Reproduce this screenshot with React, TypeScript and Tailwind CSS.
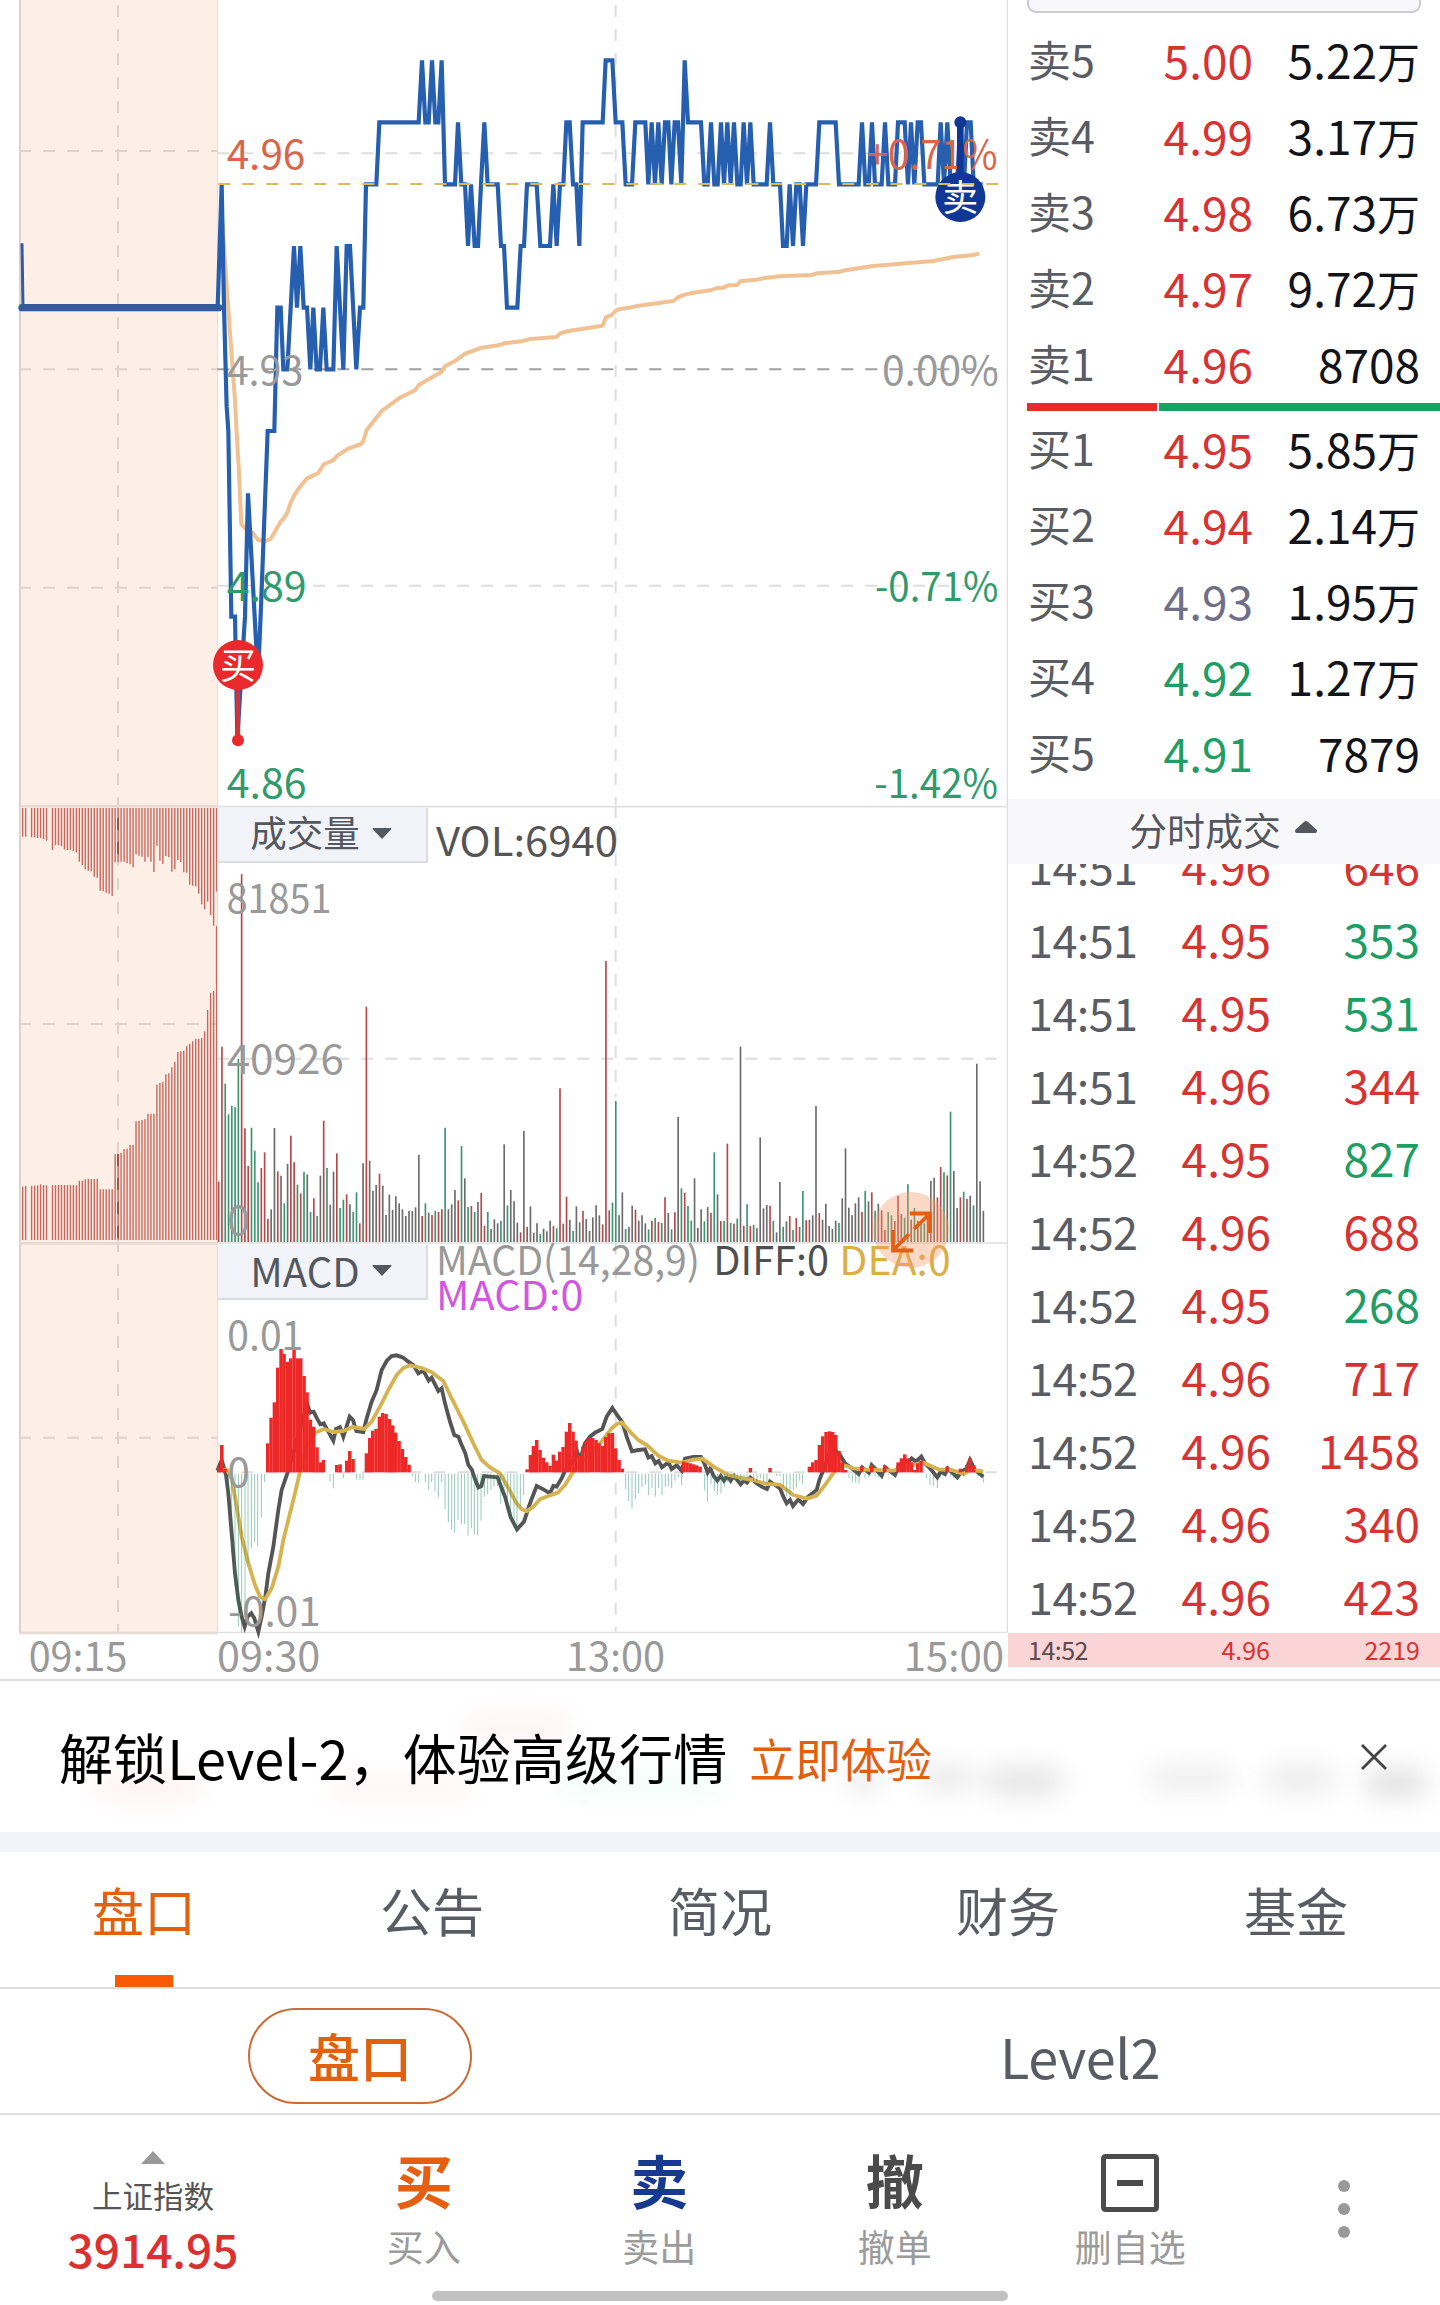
import { FaCaretDown } from "react-icons/fa6"
import clsx from "clsx"

type Level = { name: string; price: string; volume: string; unit?: string; tone: string }
type Trade = { time: string; price: string; volume: string; up: boolean }

const BAR_COLORS: Record<string, string> = { r: "#b8474a", g: "#3a9570", k: "#6c6c6c" }

// charts are drawn at 3 units per css pixel
const PRICE_LINE =
  "653,923 665,553 672,923 680,1220 685,1293 694,1850 705,1850 712,2215 735,1850 744,1480 774,2035 783,1820 803,1293 823,1293 " +
  "832,923 842,923 850,1108 862,1108 882,738 891,923 901,738 911,923 921,923 931,1108 940,923 950,1108 960,1108 970,923 980,1108 " +
  "1000,1108 1010,738 1030,1108 1040,738 1050,738 1069,1108 1080,923 1090,923 1098,553 1129,553 1138,367 1256,367 1266,181 1276,367 " +
  "1286,367 1296,181 1306,367 1315,367 1325,181 1335,553 1365,553 1374,367 1384,553 1395,553 1404,738 1413,553 1424,738 1434,738 " +
  "1443,553 1453,367 1463,553 1493,553 1503,738 1512,738 1521,923 1552,923 1562,738 1572,738 1581,553 1610,553 1621,738 1650,738 " +
  "1660,553 1670,738 1680,553 1690,553 1699,367 1709,367 1719,553 1729,553 1738,738 1748,367 1808,367 1817,181 1837,181 1847,367 " +
  "1867,367 1877,553 1896,553 1906,367 1936,367 1945,553 1955,367 1965,553 1975,367 1985,553 1995,367 2005,367 2014,553 2024,367 " +
  "2034,367 2044,553 2054,181 2064,367 2103,367 2113,553 2123,553 2133,367 2143,553 2153,553 2163,367 2172,553 2182,367 2192,553 " +
  "2202,367 2212,553 2222,553 2231,367 2241,553 2251,367 2261,553 2300,553 2310,367 2320,553 2340,553 2349,738 2360,738 2369,553 " +
  "2379,738 2389,553 2399,553 2409,738 2419,553 2448,553 2458,367 2507,367 2517,553 2576,553 2586,367 2596,553 2606,553 2616,367 " +
  "2625,553 2645,553 2655,367 2665,553 2685,553 2694,367 2714,367 2724,553 2733,367 2743,553 2753,367 2763,367 2773,553 2813,553 " +
  "2822,367 2832,553 2842,367 2852,553 2871,553 2881,367 2892,553 2901,367 2912,367 2921,553 2948,553"

const AVG_LINE =
  "665,640 678,830 690,1000 705,1200 710,1300 716,1400 724,1572 735,1585 755,1595 775,1620 795,1624 812,1617 842,1565 850,1557 " +
  "862,1538 872,1508 882,1487 900,1460 920,1436 955,1419 972,1392 998,1382 1012,1367 1045,1346 1083,1332 1090,1323 1100,1290 " +
  "1145,1233 1160,1222 1200,1193 1246,1170 1256,1155 1325,1115 1335,1099 1370,1080 1393,1062 1445,1043 1500,1035 1512,1030 " +
  "1565,1024 1590,1017 1670,1011 1680,1000 1705,993 1808,977 1818,952 1835,945 1848,931 1865,926 1890,923 1910,918 2020,903 " +
  "2035,891 2055,884 2080,878 2135,870 2150,864 2170,863 2185,856 2212,855 2222,843 2270,839 2300,833 2340,829 2435,825 " +
  "2450,820 2520,815 2535,811 2620,798 2700,791 2800,783 2860,771 2920,765 2938,760"

// call auction: matched volume grows from the bottom, unmatched hangs from the top (0 = no bar)
const AUCTION_TOP = [
  110, 110, 0, 112, 112, 114, 114, 117, 122, 0, 150, 135, 135, 138, 148, 150, 150, 153, 157, 185, 195, 208, 212, 214, 230, 233,
  272, 274, 278, 281, 288, 187, 187, 185, 185, 190, 193, 202, 163, 167, 170, 185, 172, 185, 216, 137, 182, 192, 168, 172, 215,
  208, 180, 186, 217, 218, 254, 257, 259, 281, 313, 328, 305, 345, 377, 275,
]
const AUCTION_BOTTOM = [
  1160, 1158, 0, 1158, 1157, 1156, 1153, 1155, 1156, 0, 1155, 1155, 1155, 1155, 1155, 1155, 1155, 1155, 1156, 1142, 1142, 1138,
  1137, 1137, 1137, 1137, 1168, 1168, 1168, 1168, 1168, 1063, 1062, 1058, 1047, 1046, 1035, 1035, 964, 963, 960, 957, 941, 941,
  941, 854, 849, 846, 823, 820, 802, 786, 756, 754, 752, 738, 731, 724, 717, 717, 714, 694, 630, 579, 573, 377,
]

const VOLUME = (
  "r1145 r740 g851 g943 g917 g922 g777 r223 r985 r1098 g983 g1052 g1147 r1104 r1057 r1257 k1228 k984 r1114 k1127 g1210 k1092 " +
  "r1007 r1087 g1154 r1180 g1115 k1123 g1236 r1195 g1248 k1127 r962 g1104 k1214 k1115 r1060 g1224 g1199 r1183 k1213 g1236 " +
  "g1177 r1270 k1090 r620 k1082 k1172 k1155 r1121 k1157 k1245 k1184 k1230 k1189 k1210 k1228 k1248 k1233 k1233 k1222 k1065 " +
  "r1248 g1210 k1238 r1245 g1233 r1236 r1228 g983 k1228 k1213 k1170 r1201 g1038 k1135 g1221 r1218 g1236 k1206 r1179 r1277 " +
  "g1236 k1287 k1258 k1270 g1262 k1033 g1216 k1170 k1204 k1268 r1297 k993 r1281 k1219 k1298 k1270 g1302 k1286 k1294 k1262 " +
  "r1278 g1285 r865 k1271 r1190 k1259 g1293 k1219 g1267 r1233 k1257 k1293 k1252 k1216 k1246 r1273 r483 k1231 g1208 g903 " +
  "k1246 k1177 g1287 k1281 k1217 r1229 k1262 k1246 k1270 g1288 r1262 g1254 r1266 g1269 r1192 k1239 g1288 r1237 k951 g1165 " +
  "r1178 g1218 g1262 k1135 k1284 k1228 g1264 k1221 r1238 g1057 k1183 r1263 g1263 r1031 g1269 r1271 g1256 k740 r1277 g1213 " +
  "r1278 g1275 k1285 k1012 k1225 k1215 r1217 g1263 k1297 k1146 g1281 k1264 r1248 g1290 r1254 k1281 g1173 r1261 k1259 k1246 " +
  "k918 r1239 k1259 k1211 k1278 k1287 k1262 g1269 k1195 k1045 k1223 k1246 k1210 k1192 r1236 g1173 k1204 r1177 g1233 k1211 " +
  "r1231 r1290 g1236 g1246 r1263 r1187 k1242 g1253 g1153 r1259 g1224 r1262 g1265 g1270 r1250 k1143 k1133 r1192 r1101 g1117 " +
  "r1126 g935 k1113 k1224 r1192 g1175 r1197 k1187 g1216 k791 k1144 k1233"
).split(" ")

const DIFF_LINE =
  "52,722 65,690 78,735 85,790 95,910 105,1030 115,1110 125,1160 134,1190 143,1160 154,1150 163,1165 175,1205 185,1160 196,1100 " +
  "205,1030 220,950 235,840 245,780 262,730 300,600 321,520 330,548 341,545 351,565 361,583 371,580 385,605 400,632 408,597 " +
  "420,592 430,620 439,592 449,560 459,570 469,603 490,606 500,565 515,515 530,480 545,420 560,393 575,378 590,376 610,383 " +
  "625,395 640,405 655,430 670,422 686,452 695,443 705,463 715,483 725,475 735,520 750,575 763,615 775,620 785,645 796,670 " +
  "805,705 815,718 826,750 835,772 844,768 852,738 893,742 905,775 915,800 932,862 951,898 972,875 990,820 1010,768 1030,778 " +
  "1050,790 1060,768 1070,770 1085,745 1095,722 1120,690 1130,660 1140,690 1155,640 1170,620 1185,608 1207,597 1220,560 " +
  "1237,534 1250,553 1267,577 1280,620 1296,664 1315,660 1335,658 1345,683 1355,678 1366,700 1376,693 1386,712 1405,697 " +
  "1415,717 1430,706 1445,722 1455,686 1480,681 1503,681 1513,700 1523,728 1531,715 1541,738 1552,752 1562,738 1572,752 " +
  "1582,738 1592,752 1602,738 1622,763 1632,752 1641,758 1651,743 1670,760 1685,770 1701,777 1710,755 1725,765 1740,775 " +
  "1750,800 1760,820 1770,810 1779,828 1795,808 1809,822 1825,800 1850,780 1858,750 1870,720 1895,650 1920,675 1935,700 " +
  "1955,715 1976,732 1986,712 2007,728 2015,705 2045,737 2055,712 2085,735 2095,710 2115,690 2124,697 2135,685 2145,693 " +
  "2153,690 2164,680 2175,700 2190,715 2212,742 2222,725 2235,732 2243,715 2272,742 2285,725 2300,715 2310,690 2325,720 2350,740"

const DEA_LINE =
  "52,722 80,718 95,745 110,830 125,920 145,1000 165,1065 180,1100 195,1108 215,1075 235,1010 250,930 270,850 285,790 300,725 " +
  "320,650 345,608 372,597 400,606 430,603 457,591 493,597 515,575 540,530 565,480 590,435 610,414 630,406 665,414 695,427 " +
  "730,453 750,495 790,575 820,640 845,690 870,712 900,730 920,765 950,820 965,838 980,844 1000,830 1020,808 1050,796 1075,787 " +
  "1095,765 1115,732 1150,690 1200,640 1235,595 1250,583 1265,577 1290,605 1315,630 1340,645 1375,677 1405,692 1445,698 " +
  "1475,690 1507,686 1545,713 1585,735 1630,745 1660,750 1700,762 1740,764 1780,795 1820,806 1850,797 1875,765 1903,725 " +
  "1930,705 1960,715 2000,719 2080,722 2110,712 2170,698 2215,718 2255,720 2290,732 2310,720 2350,724"

const MACD_BARS = (
  "56,712 65,645 75,716 85,790 95,970 105,1070 115,1190 125,1208 135,1155 144,1000 154,955 164,937 173,948 184,862 194,756 " +
  "203,640 213,563 223,517 233,413 243,357 252,372 262,396 272,385 282,353 292,385 302,385 312,438 321,487 331,569 341,590 " +
  "351,652 361,697 370,690 390,755 400,775 410,705 420,703 430,745 440,692 449,663 459,687 470,749 480,749 489,749 499,670 " +
  "509,624 518,602 528,597 538,560 548,549 558,552 568,567 578,586 587,608 597,633 607,657 617,681 627,704 637,739 646,756 " +
  "656,758 676,757 686,779 695,757 705,784 715,802 725,757 735,838 745,877 755,900 764,908 774,870 784,882 794,882 804,917 " +
  "814,895 823,912 833,915 843,872 853,800 863,793 873,780 882,770 892,768 902,822 912,790 922,830 932,872 942,893 951,902 " +
  "961,830 971,795 981,718 991,675 1000,648 1010,630 1020,660 1030,683 1040,697 1050,707 1060,674 1069,692 1079,665 1089,651 " +
  "1099,605 1109,579 1119,605 1128,632 1138,675 1148,650 1158,632 1168,624 1178,624 1188,630 1197,640 1207,648 1217,621 " +
  "1227,610 1237,609 1247,655 1257,690 1267,716 1277,777 1286,813 1296,836 1306,808 1316,790 1326,772 1336,764 1346,795 " +
  "1356,774 1366,800 1376,775 1386,795 1396,770 1405,768 1415,775 1425,752 1435,742 1445,765 1451,695 1461,698 1471,700 " +
  "1480,703 1490,706 1500,710 1514,782 1522,815 1533,762 1543,783 1552,795 1563,790 1573,770 1583,755 1593,762 1603,750 " +
  "1612,757 1622,757 1632,742 1641,745 1651,714 1661,752 1671,757 1681,745 1691,755 1701,760 1710,714 1730,738 1740,738 " +
  "1750,770 1760,798 1770,803 1780,780 1789,772 1799,752 1808,762 1828,710 1838,697 1848,690 1858,645 1868,619 1878,606 " +
  "1888,604 1898,606 1907,615 1917,663 1927,697 1936,720 1947,745 1957,757 1967,757 1977,760 1985,710 1995,745 2005,740 " +
  "2015,705 2025,738 2035,742 2045,748 2054,706 2065,735 2085,740 2094,697 2104,685 2114,673 2124,685 2134,697 2144,720 " +
  "2153,700 2163,692 2180,745 2190,765 2200,768 2212,774 2222,742 2241,710 2252,740 2262,745 2272,750 2281,716 2290,740 " +
  "2300,705 2310,685 2320,705 2335,738 2350,757"
)
  .split(" ")
  .map((pair) => pair.split(",").map(Number))

const asks: Level[] = [
  { name: "卖5", price: "5.00", volume: "5.22", unit: "万", tone: "text-[#d63333]" },
  { name: "卖4", price: "4.99", volume: "3.17", unit: "万", tone: "text-[#d63333]" },
  { name: "卖3", price: "4.98", volume: "6.73", unit: "万", tone: "text-[#d63333]" },
  { name: "卖2", price: "4.97", volume: "9.72", unit: "万", tone: "text-[#d63333]" },
  { name: "卖1", price: "4.96", volume: "8708", tone: "text-[#d63333]" },
]

const bids: Level[] = [
  { name: "买1", price: "4.95", volume: "5.85", unit: "万", tone: "text-[#d63333]" },
  { name: "买2", price: "4.94", volume: "2.14", unit: "万", tone: "text-[#d63333]" },
  { name: "买3", price: "4.93", volume: "1.95", unit: "万", tone: "text-[#6f7088]" },
  { name: "买4", price: "4.92", volume: "1.27", unit: "万", tone: "text-[#1f9d65]" },
  { name: "买5", price: "4.91", volume: "7879", tone: "text-[#1f9d65]" },
]

const trades: Trade[] = [
  { time: "14:51", price: "4.96", volume: "646", up: true },
  { time: "14:51", price: "4.95", volume: "353", up: false },
  { time: "14:51", price: "4.95", volume: "531", up: false },
  { time: "14:51", price: "4.96", volume: "344", up: true },
  { time: "14:52", price: "4.95", volume: "827", up: false },
  { time: "14:52", price: "4.96", volume: "688", up: true },
  { time: "14:52", price: "4.95", volume: "268", up: false },
  { time: "14:52", price: "4.96", volume: "717", up: true },
  { time: "14:52", price: "4.96", volume: "1458", up: true },
  { time: "14:52", price: "4.96", volume: "340", up: true },
  { time: "14:52", price: "4.96", volume: "423", up: true },
]

const tabs = ["盘口", "公告", "简况", "财务", "基金"]

interface LabelProps {
  x: number
  y: number
  width: number
  fill?: string
  children: string
}

const Label = ({ x, y, width, fill = "#999999", children }: LabelProps) => (
  <text x={x} y={y} textLength={width} lengthAdjust="spacingAndGlyphs" fontSize={120} fill={fill}>
    {children}
  </text>
)

interface DashProps {
  x1: number
  y1: number
  x2: number
  y2: number
  color?: string
}

const Dash = ({ x1, y1, x2, y2, color = "#dedede" }: DashProps) => (
  <line x1={x1} y1={y1} x2={x2} y2={y2} stroke={color} strokeWidth={6} strokeDasharray="36 36" />
)

const PriceChart = () => (
  <svg viewBox="0 0 3024 2415" className="block h-[805px] w-[1008px]">
    <rect x={60} y={0} width={593} height={2415} fill="#fdeee6" />
    <Dash x1={354} y1={-57} x2={354} y2={2415} color="#e0d3cc" />
    <Dash x1={57} y1={453} x2={653} y2={453} color="#e0d3cc" />
    <Dash x1={57} y1={1108} x2={653} y2={1108} color="#e0d3cc" />
    <Dash x1={57} y1={1763} x2={653} y2={1763} color="#e0d3cc" />
    <line x1={60} y1={0} x2={60} y2={2415} stroke="#ddd3ce" strokeWidth={6} />
    <line x1={653} y1={0} x2={653} y2={2415} stroke="#e0dcda" strokeWidth={3} />
    <line x1={3022} y1={0} x2={3022} y2={2415} stroke="#dfdfdf" strokeWidth={4} />
    <Dash x1={1847} y1={-57} x2={1847} y2={2415} />
    <Dash x1={652} y1={460} x2={2990} y2={460} />
    <Dash x1={652} y1={1108} x2={2990} y2={1108} color="#a0a0a0" />
    <Dash x1={652} y1={1757} x2={2990} y2={1757} />

    <polyline points={AVG_LINE} fill="none" stroke="#f2c193" strokeWidth={12} strokeLinejoin="round" />
    <polyline points="66,730 69,923" fill="none" stroke="#365a9f" strokeWidth={9} />
    <line x1={66} y1={923} x2={656} y2={923} stroke="#365a9f" strokeWidth={22} strokeLinecap="round" />
    <polyline points={PRICE_LINE} fill="none" stroke="#265fb0" strokeWidth={12.5} />

    <Label x={680} y={507} width={236} fill="#d9654a">4.96</Label>
    <Label x={680} y={1155} width={230}>4.93</Label>
    <Label x={680} y={1802} width={240} fill="#2f9a6c">4.89</Label>
    <Label x={680} y={2393} width={240} fill="#2f9a6c">4.86</Label>
    <Label x={2600} y={507} width={393} fill="#d9654a">+0.71%</Label>
    <Label x={2646} y={1155} width={350}>0.00%</Label>
    <Label x={2625} y={1802} width={370} fill="#2f9a6c">-0.71%</Label>
    <Label x={2623} y={2393} width={371} fill="#2f9a6c">-1.42%</Label>

    <g fill="#e9292c">
      <line x1={714} y1={2000} x2={714} y2={2220} stroke="#cf343c" strokeWidth={13} />
      <circle cx={714} cy={2221} r={18} />
      <circle cx={714} cy={1995} r={75} />
      <text x={714} y={2036} fontSize={108} fill="#ffffff" textAnchor="middle">买</text>
    </g>
    <g fill="#103796">
      <line x1={2881} y1={367} x2={2881} y2={591} stroke="#103796" strokeWidth={20} />
      <circle cx={2881} cy={367} r={18} />
      <circle cx={2881} cy={591} r={75} />
      <text x={2881} y={632} fontSize={108} fill="#ffffff" textAnchor="middle">卖</text>
    </g>
    <Dash x1={655} y1={552} x2={2996} y2={552} color="#d8b95c" />
  </svg>
)

const VolumeChart = () => (
  <svg viewBox="0 15 3024 1311" className="block h-[437px] w-[1008px]">
    <rect x={60} y={15} width={593} height={1311} fill="#fdeee6" />
    <Dash x1={354} y1={18} x2={354} y2={1330} color="#e0d3cc" />
    <Dash x1={57} y1={672} x2={653} y2={672} color="#e0d3cc" />
    {AUCTION_TOP.map((y, i) => y > 0 && (
      <line key={i} x1={68 + i * 8.95} x2={68 + i * 8.95} y1={24} y2={y} stroke="#c9675d" strokeWidth={4.2} />
    ))}
    {AUCTION_BOTTOM.map((y, i) => y > 0 && (
      <line key={i} x1={68 + i * 8.95} x2={68 + i * 8.95} y1={y} y2={1320} stroke="#c9675d" strokeWidth={4.2} />
    ))}
    <line x1={354} x2={354} y1={54} y2={187} stroke="#a5524c" strokeWidth={6} strokeDasharray="36 36" />
    <line x1={354} x2={354} y1={1062} y2={1320} stroke="#a5524c" strokeWidth={6} strokeDasharray="36 36" />
    <line x1={60} y1={15} x2={60} y2={1326} stroke="#ddd3ce" strokeWidth={6} />
    <line x1={653} y1={15} x2={653} y2={1326} stroke="#e0dcda" strokeWidth={3} />
    <line x1={57} y1={18} x2={653} y2={18} stroke="#e6dad4" strokeWidth={8} />
    <line x1={653} y1={20} x2={3022} y2={20} stroke="#dfdfdf" strokeWidth={5} />
    <line x1={3022} y1={15} x2={3022} y2={1326} stroke="#dfdfdf" strokeWidth={4} />
    <Dash x1={1847} y1={18} x2={1847} y2={890} />
    <Dash x1={652} y1={776} x2={2990} y2={776} />
    {VOLUME.map((bar, i) => (
      <line
        key={i}
        x1={656 + i * 9.846}
        x2={656 + i * 9.846}
        y1={Number(bar.slice(1))}
        y2={1327}
        stroke={BAR_COLORS[bar[0]]}
        strokeWidth={5}
      />
    ))}
    <Label x={1308} y={167} width={546} fill="#555555">VOL:6940</Label>
    <Label x={680} y={340} width={314}>81851</Label>
    <Label x={680} y={822} width={352}>40926</Label>
    <Label x={682} y={1304} width={68}>0</Label>
  </svg>
)

const MacdChart = () => (
  <svg viewBox="-600 36 3024 1311" className="block h-[437px] w-[1008px]">
    <rect x={-540} y={36} width={593} height={1172} fill="#fdeee6" />
    <Dash x1={-246} y1={30} x2={-246} y2={1208} color="#e0d3cc" />
    <Dash x1={-543} y1={623} x2={53} y2={623} color="#e0d3cc" />
    <line x1={-540} y1={36} x2={-540} y2={1210} stroke="#ddd3ce" strokeWidth={6} />
    <line x1={53} y1={36} x2={53} y2={1208} stroke="#e0dcda" strokeWidth={3} />
    <line x1={-543} y1={40} x2={53} y2={40} stroke="#e6dad4" strokeWidth={8} />
    <line x1={-543} y1={1209} x2={53} y2={1209} stroke="#e6dad4" strokeWidth={8} />
    <line x1={53} y1={39} x2={2422} y2={39} stroke="#dfdfdf" strokeWidth={5} />
    <line x1={53} y1={1207} x2={2422} y2={1207} stroke="#dfdfdf" strokeWidth={4} />
    <line x1={2422} y1={36} x2={2422} y2={1207} stroke="#dfdfdf" strokeWidth={4} />
    <Dash x1={1247} y1={38} x2={1247} y2={1205} />
    <Dash x1={52} y1={727} x2={2390} y2={727} />

    <polyline points={DIFF_LINE} fill="none" stroke="#555555" strokeWidth={11.5} />
    <polyline points={DEA_LINE} fill="none" stroke="#d6b350" strokeWidth={11.5} strokeLinejoin="round" />
    {MACD_BARS.map(([x, y]) =>
      y < 727 ? (
        <rect key={x} x={x - 5} y={y} width={10.4} height={727 - y} fill="#ee2727" />
      ) : (
        <rect key={x} x={x - 1.5} y={731} width={3} height={y - 731} fill="#128a5c" opacity={0.45} />
      )
    )}

    <Label x={708} y={134} width={792}>MACD(14,28,9)</Label>
    <Label x={1540} y={134} width={347} fill="#4f4f4f">DIFF:0</Label>
    <Label x={1918} y={134} width={334} fill="#dcae48">DEA:0</Label>
    <Label x={708} y={239} width={442} fill="#d057e0">MACD:0</Label>
    <Label x={82} y={360} width={228}>0.01</Label>
    <Label x={82} y={772} width={68}>0</Label>
    <Label x={84} y={1187} width={278}>-0.01</Label>
    <Label x={-514} y={1322} width={296}>09:15</Label>
    <Label x={51} y={1322} width={310}>09:30</Label>
    <Label x={1098} y={1322} width={297}>13:00</Label>
    <Label x={2111} y={1322} width={301}>15:00</Label>
  </svg>
)

const IndicatorSelect = ({ label, className }: { label: string; className: string }) => (
  <button
    className={clsx(
      "absolute left-[218px] flex h-[55px] w-[210px] items-center justify-center gap-3 border-r-2 border-b-2 border-[#dcdde0] bg-[#f2f3f8] pr-0.5 leading-none text-[#535760]",
      className
    )}
  >
    <span className="-mt-1">{label}</span>
    <svg viewBox="0 0 20 11" className="-mt-0.5 h-[11px] w-5" fill="currentColor">
      <path d="M1 0H19Q20 .5 19 1.5L10 11L1 1.5Q0 .5 1 0Z" />
    </svg>
  </button>
)

const ExpandButton = () => (
  <svg viewBox="0 0 76 76" className="absolute top-[1192px] left-[873px] size-[76px]" fill="none">
    <circle cx="38" cy="38" r="38" fill="#f79b6c" opacity="0.38" />
    <path d="M37 21.5H57V41M57 21.5L41 37M20 38V58.5H40M20 58.5L36 42" stroke="#e65f10" strokeWidth="3.8" />
  </svg>
)

const LevelRow = ({ level }: { level: Level }) => (
  <div className="flex h-[76px] items-center pb-[5px] leading-none">
    <span className="w-[84px] text-[43px] whitespace-nowrap text-[#595c62]">{level.name}</span>
    <span className={clsx("w-[141px] text-right text-[46px]", level.tone)}>{level.price}</span>
    <span className="flex-1 text-right text-[46px] whitespace-nowrap text-[#12141a]">
      {level.volume}
      {level.unit && <span className="text-[43px]">{level.unit}</span>}
    </span>
  </div>
)

const OrderBook = () => (
  <aside className="flex h-[1680px] w-[432px] flex-col">
    <div className="mr-[19px] ml-[19px] h-[13px] shrink-0 rounded-b-[9px] border-2 border-t-0 border-[#cbccd0] bg-[#f8f8fc]" />
    <div className="mt-2.5 pr-5 pl-5">
      {asks.map((level) => <LevelRow key={level.name} level={level} />)}
    </div>
    <div className="flex h-2 shrink-0 gap-0.5 pl-[19px]">
      <div className="w-[130px] bg-[#ea2a2a]" />
      <div className="flex-1 bg-[#14a562]" />
    </div>
    <div className="mt-px h-[387px] pr-5 pl-5">
      {bids.map((level) => <LevelRow key={level.name} level={level} />)}
    </div>
    <div className="flex h-[65px] shrink-0 items-center justify-center gap-3.5 bg-[#f8f8fb] pr-0.5 pb-1.5 text-[38px] leading-none text-[#55575e]">
      <span>分时成交</span>
      <FaCaretDown className="h-8 w-[22px] rotate-180" preserveAspectRatio="none" />
    </div>
    <div className="flex h-[769px] shrink-0 flex-col justify-end overflow-hidden pr-5 pl-5">
      {trades.map((trade, i) => (
        <div key={i} className="flex h-[73px] shrink-0 items-center pb-[3px] text-[45px] leading-none tracking-[-0.6px]">
          <span className="w-[120px] text-[#5a5d63]">{trade.time}</span>
          <span className="w-[123px] text-right text-[46px] tracking-normal text-[#d63333]">{trade.price}</span>
          <span className={clsx("flex-1 text-right text-[46px] tracking-normal", trade.up ? "text-[#d63333]" : "text-[#1f9d65]")}>
            {trade.volume}
          </span>
        </div>
      ))}
    </div>
    <div className="flex h-[34px] shrink-0 items-center bg-[#fbd5d5] pr-5 pb-0.5 pl-5 text-[25px] leading-none">
      <span className="w-[120px] tracking-[-0.5px] text-[#5c4b50]">14:52</span>
      <span className="w-[122px] text-right text-[#d63333]">4.96</span>
      <span className="flex-1 text-right text-[#d63333]">2219</span>
    </div>
  </aside>
)

const Banner = () => (
  <div className="relative flex h-[153px] items-center overflow-hidden border-t-2 border-[#dfe0e1] bg-white leading-none">
    {/* index quotes showing through the frosted panel */}
    <div className="absolute top-[34px] left-[465px] h-6 w-[105px] rounded-full bg-red-200/25 blur-md" />
    <div className="absolute top-[94px] left-[95px] h-6 w-[105px] rounded-full bg-red-200/25 blur-md" />
    <div className="absolute top-[94px] left-[330px] h-6 w-[140px] rounded-full bg-red-200/20 blur-md" />
    <div className="absolute top-[90px] left-[560px] h-6 w-[165px] rounded-full bg-emerald-200/15 blur-md" />
    <div className="absolute top-[88px] left-[848px] h-6 w-8 rounded-full bg-neutral-300/50 blur-md" />
    <div className="absolute top-[85px] left-[920px] h-6 w-[55px] rounded-full bg-neutral-300/50 blur-md" />
    <div className="absolute top-[86px] left-[985px] h-7 w-[78px] rounded-full bg-neutral-300/60 blur-md" />
    <div className="absolute top-[85px] left-[1148px] h-6 w-[85px] rounded-full bg-neutral-200/70 blur-md" />
    <div className="absolute top-[84px] left-[1265px] h-7 w-[70px] rounded-full bg-neutral-300/45 blur-md" />
    <div className="absolute top-[88px] left-[1365px] h-7 w-[62px] rounded-full bg-neutral-300/70 blur-md" />
    <p className="relative pl-[59px] text-[54px] tracking-[0.1px] whitespace-nowrap text-black">解锁Level-2，体验高级行情</p>
    <a className="relative ml-[22px] text-[46px] tracking-[-0.4px] whitespace-nowrap text-[#e0600f]">立即体验</a>
    <svg viewBox="0 0 26 26" className="relative mr-[53px] ml-auto size-[26px]" stroke="#444444" strokeWidth="2.8">
      <path d="M1 1L25 25M25 1L1 25" />
    </svg>
  </div>
)

const Tabs = () => (
  <nav className="flex h-[137px] border-b-2 border-[#dfdfe0]">
    {tabs.map((tab, i) => (
      <div
        key={tab}
        className={clsx(
          "flex flex-1 flex-col items-center justify-between pt-[30px] text-[52px] leading-[56px]",
          i === 0 ? "text-[#e2610f]" : "text-[#595c63]"
        )}
      >
        <span>{tab}</span>
        {i === 0 && <span className="h-3 w-[58px] bg-[#f95a02]" />}
      </div>
    ))}
  </nav>
)

const SubTabs = () => (
  <div className="flex h-[126px] items-center border-b-2 border-[#dfdfe0] leading-none">
    <div className="flex flex-1 justify-center">
      <span className="mt-2.5 flex h-24 w-56 items-center justify-center rounded-full border-2 border-[#cb6b35] text-[52px] font-medium text-[#e2610f]">
        盘口
      </span>
    </div>
    <div className="flex-1 pt-2.5 text-center text-[54px] tracking-[-0.3px] text-[#595c63]">Level2</div>
  </div>
)

const Action = ({ glyph, label, tone }: { glyph: string; label: string; tone: string }) => (
  <div className="flex w-[235.5px] flex-col items-center pt-[34px] leading-none">
    <span className={clsx("text-[58px] leading-[60px] font-bold", tone)}>{glyph}</span>
    <span className="mt-[19px] text-[37px] text-[#9b9b9b]">{label}</span>
  </div>
)

const BottomBar = () => (
  <footer className="relative flex h-[190px] bg-white">
    <div className="flex w-[306px] flex-col items-center pt-9 leading-none">
      <svg viewBox="0 0 24 13" className="h-[13px] w-6" fill="#999999">
        <path d="M12 0L24 13H0Z" />
      </svg>
      <span className="mt-4 text-[30.5px] text-[#555555]">上证指数</span>
      <span className="mt-3.5 text-[46px] font-medium text-[#dc3030]">3914.95</span>
    </div>
    <Action glyph="买" label="买入" tone="text-[#e65f10]" />
    <Action glyph="卖" label="卖出" tone="text-[#17398f]" />
    <Action glyph="撤" label="撤单" tone="text-[#4b4b4b]" />
    <div className="flex w-[235.5px] flex-col items-center pt-[39px] leading-none">
      <svg viewBox="0 0 58 58" className="size-[58px]" fill="none" stroke="#4b4b4b">
        <rect x="2.5" y="2.5" width="53" height="53" rx="2" strokeWidth="5" />
        <path d="M16 29H42" strokeWidth="6" />
      </svg>
      <span className="mt-4 text-[37px] text-[#9b9b9b]">删自选</span>
    </div>
    <div className="flex flex-1 flex-col items-center gap-[11px] pt-[65px]">
      <span className="size-3 rounded-full bg-[#999999]" />
      <span className="size-3 rounded-full bg-[#999999]" />
      <span className="size-3 rounded-full bg-[#999999]" />
    </div>
    <div className="absolute bottom-1 left-[432px] h-[10px] w-[576px] rounded-full bg-[#c1c1c1]" />
  </footer>
)

const App = () => {
  return (
    <div className="h-[2305px] w-[1440px] overflow-hidden bg-white font-['Noto_Sans_CJK_SC','Noto_Sans',sans-serif]">
      <main className="flex h-[1679px]">
        <section className="relative w-[1008px]">
          <PriceChart />
          <VolumeChart />
          <MacdChart />
          <IndicatorSelect label="成交量" className="top-[808px] text-[36.5px]" />
          <IndicatorSelect label="MACD" className="top-[1245px] text-[40px]" />
          <ExpandButton />
        </section>
        <OrderBook />
      </main>
      <Banner />
      <div className="h-5 bg-[#f2f4f9]" />
      <Tabs />
      <SubTabs />
      <BottomBar />
    </div>
  )
}

export default App
